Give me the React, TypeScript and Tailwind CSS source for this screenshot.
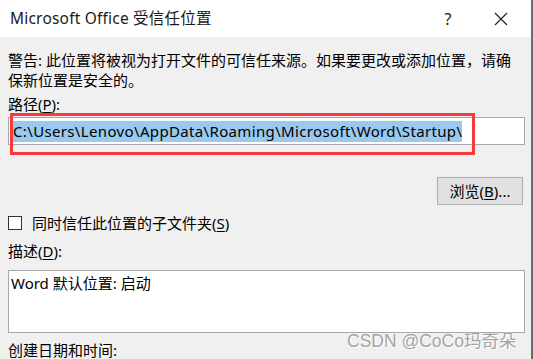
import React from 'react';

const U: React.FC<{ children: React.ReactNode }> = ({ children }) => (
  <span className="underline underline-offset-2 decoration-1">{children}</span>
);

export default function App() {
  return (
    <div className="relative w-[533px] h-[359px] overflow-hidden bg-[#f0f0f0] font-['Noto_Sans','Noto_Sans_CJK_SC',sans-serif] text-[15px] text-black">
      <div className="flex h-full">
        <div className="flex flex-col w-[531px] h-full">
          {/* title bar */}
          <div className="h-[37px] shrink-0 bg-white flex items-center pl-[10px]">
            <span className="flex-1 text-[15.5px] tracking-[0.2px] text-[#1a1a1a]">Microsoft Office 受信任位置</span>
            <span className="w-[20px] text-center text-[16px] text-[#222] mr-[36px]">?</span>
            <svg width="14" height="14" viewBox="0 0 14 14" className="mr-[23px]">
              <path d="M1 1L13 13M13 1L1 13" stroke="#222" strokeWidth="1.2" />
            </svg>
          </div>

          {/* body */}
          <div className="flex flex-col pl-[8px] pr-[6px] pt-[13px]">
            <p className="leading-[20px]">
              警告: 此位置将被视为打开文件的可信任来源。如果要更改或添加位置，请确
              <br />
              保新位置是安全的。
            </p>

            <div className="mt-[4px] leading-[20px]">
              路径(<U>P</U>):
            </div>
            <div className="mt-[3px] h-[28px] bg-white border border-[#a8a8a8] flex items-center overflow-hidden pl-[4px]">
              <span className="bg-[#99c9ef] h-[21px] leading-[21px] whitespace-nowrap tracking-[0.35px]">
                C:\Users\Lenovo\AppData\Roaming\Microsoft\Word\Startup\
              </span>
            </div>

            <div className="mt-[32px] flex justify-end pr-[2px]">
              <button className="w-[86px] h-[28px] bg-[#e1e1e1] border border-[#adadad] text-[15px] leading-none">
                浏览(<U>B</U>)...
              </button>
            </div>

            <label className="mt-[8px] flex items-center h-[20px]">
              <span className="w-[14px] h-[14px] border border-[#333] bg-white mr-[10px]" />
              同时信任此位置的子文件夹(<U>S</U>)
            </label>

            <div className="mt-[8px] leading-[20px]">
              描述(<U>D</U>):
            </div>
            <div className="mt-[9px] h-[63px] bg-white border border-[#a8a8a8] px-[2px] pt-[1px] leading-[22px]">
              Word 默认位置: 启动
            </div>

            <div className="mt-[7px] leading-[20px]">创建日期和时间:</div>
          </div>
        </div>
        <div className="w-[2px] h-full bg-[#6b6b6b]" />
      </div>

      {/* annotation box */}
      <div className="absolute left-[10px] top-[113px] w-[465px] h-[42px] border-[3px] border-[#f73a3a]" />

      {/* watermark */}
      <div className="absolute left-[347px] top-[331px] font-['Liberation_Sans','Noto_Sans_CJK_SC',sans-serif] text-[17.5px] leading-[20px] text-[#a3a3a3] [text-shadow:0_0_1px_#fff,1px_1px_0_#fff]">
        CSDN @CoCo玛奇朵
      </div>
    </div>
  );
}
